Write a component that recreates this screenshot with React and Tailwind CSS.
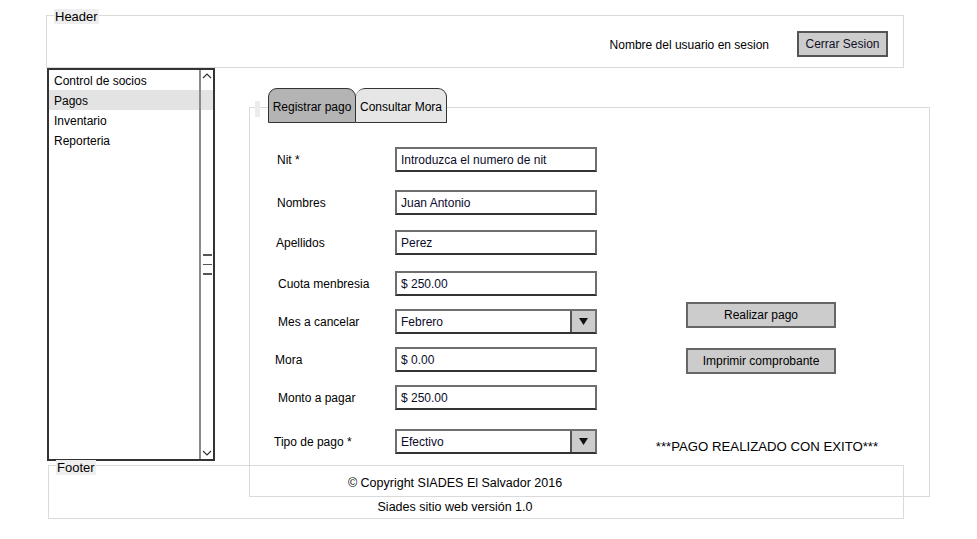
import React from 'react';

const sketch = { fontFamily: '"Liberation Sans", Arial, sans-serif' };

const rows = [
    { label: 'Nit *', value: 'Introduzca el numero de nit', mt: 'mt-[39px]', pl: 'pl-[27px]' },
    { label: 'Nombres', value: 'Juan Antonio', mt: 'mt-[18px]', pl: 'pl-[27px]' },
    { label: 'Apellidos', value: 'Perez', mt: 'mt-[15px]', pl: 'pl-[26px]' },
    { label: 'Cuota menbresia', value: '$ 250.00', mt: 'mt-[16px]', pl: 'pl-[28px]' },
    { label: 'Mes a cancelar', value: 'Febrero', mt: 'mt-[13px]', pl: 'pl-[28px]', select: true },
    { label: 'Mora', value: '$ 0.00', mt: 'mt-[13px]', pl: 'pl-[25px]' },
    { label: 'Monto a pagar', value: '$ 250.00', mt: 'mt-[13px]', pl: 'pl-[28px]' },
    { label: 'Tipo de pago *', value: 'Efectivo', mt: 'mt-[19px]', pl: 'pl-[24px]', select: true },
];

function Field({ row }) {
    return (
        <div className={`flex items-center ${row.mt}`}>
            <div className={`w-[145px] ${row.pl} text-[12px] text-black`}>{row.label}</div>
            <div className="flex h-[25px] w-[202px] items-stretch border-2 border-[#6e6e6e] border-b-[#333] bg-white">
                <div className="flex flex-1 items-center pl-[4px] text-[12px] text-[#0b0b2b]">{row.value}</div>
                {row.select && (
                    <div className="flex w-[25px] items-center justify-center border-l-2 border-[#555] bg-[#cccccc]">
                        <svg width="9" height="7" viewBox="0 0 9 7"><path d="M0 0h9L4.5 7z" fill="#111" /></svg>
                    </div>
                )}
            </div>
        </div>
    );
}

function SideList() {
    const items = ['Control de socios', 'Pagos', 'Inventario', 'Reporteria'];
    return (
        <aside className="relative ml-[47px] h-[393px] w-[168px] border-2 border-[#333] bg-white">
            <ul>
                {items.map((it) => (
                    <li key={it} className={`flex h-[20px] items-center pl-[5px] pt-[1px] text-[12px] text-black ${it === 'Pagos' ? 'bg-[#e3e3e3]' : ''}`}>
                        {it}
                    </li>
                ))}
            </ul>
            <div className="absolute right-0 top-0 flex h-full w-[14px] flex-col items-center justify-between border-l-2 border-[#8a8a8a] bg-transparent">
                <svg width="10" height="8" viewBox="0 0 10 8" className="mt-[2px]"><path d="M1 6l4-4 4 4" stroke="#333" strokeWidth="1.2" fill="none" /></svg>
                <div className="flex flex-col gap-[8px]">
                    <div className="h-[1.5px] w-[9px] bg-[#555]" />
                    <div className="h-[1.5px] w-[9px] bg-[#555]" />
                    <div className="h-[1.5px] w-[9px] bg-[#555]" />
                </div>
                <svg width="10" height="8" viewBox="0 0 10 8" className="mb-[2px]"><path d="M1 2l4 4 4-4" stroke="#333" strokeWidth="1.2" fill="none" /></svg>
            </div>
        </aside>
    );
}

export default function App() {
    return (
        <div className="h-[539px] w-[977px] overflow-hidden bg-white pt-[15px]" style={sketch}>
            {/* Header */}
            <header className="relative ml-[46px] flex h-[53px] w-[858px] items-start justify-end border border-[#dadada] pr-[15px] pt-[15px]">
                <span className="absolute -top-[7px] left-[7px] bg-[#eeeeee] px-[1px] text-[13px] leading-[15px] text-black">Header</span>
                <div className="flex h-[26px] items-center">
                    <span className="mr-[28px] pt-[2px] text-[12px] text-black">Nombre del usuario en sesion</span>
                    <button className="h-[26px] w-[91px] border-2 border-[#555] bg-[#cccccc] text-[12px] text-[#10102a]">Cerrar Sesion</button>
                </div>
            </header>

            <div className="flex h-[393px] items-start">
                <SideList />

                <main className="ml-[34px] flex flex-col">
                    <div className="relative z-10 mb-[-16px] ml-[19px] mt-[20px] flex">
                        <div className="flex h-[35px] w-[88px] items-center justify-center rounded-t-[9px] border border-[#333] bg-[#b4b4b4] pt-[2px] text-[12px] text-black">Registrar pago</div>
                        <div className="flex h-[35px] w-[91px] items-center justify-center rounded-t-[9px] border border-l-0 border-[#333] bg-[#e6e6e6] pt-[2px] text-[12px] text-black">Consultar Mora</div>
                    </div>
                    <div className="relative h-[390px] w-[681px] border border-[#dadada]">
                        <div className="absolute -top-[7px] left-[5px] h-[16px] w-[5px] bg-[#ececec]" />
                        <div className="flex">
                            <div className="flex flex-col">
                                {rows.map((r) => (
                                    <Field key={r.label} row={r} />
                                ))}
                            </div>
                            <div className="ml-[58px] flex w-[224px] flex-col">
                                <button className="ml-[31px] mt-[194px] h-[26px] w-[150px] border-2 border-[#666] bg-[#cccccc] text-[12px] text-black">Realizar pago</button>
                                <button className="ml-[31px] mt-[20px] h-[26px] w-[150px] border-2 border-[#666] bg-[#cccccc] text-[12px] text-black">Imprimir comprobante</button>
                                <div className="mt-[63px] whitespace-nowrap text-center text-[13.2px] text-black">***PAGO REALIZADO CON EXITO***</div>
                            </div>
                        </div>
                    </div>
                </main>
            </div>

            {/* Footer */}
            <footer className="relative ml-[48px] mt-[4px] h-[54px] w-[856px] border border-[#dadada]">
                <span className="absolute -top-[6px] left-[7px] bg-[#eeeeee] px-[1px] text-[13px] leading-[15px] text-black">Footer</span>
                <div className="ml-[298px] flex w-[216px] flex-col items-center pt-[9px]">
                    <span className="whitespace-nowrap text-[12.5px] leading-[16px] text-black">© Copyright SIADES El Salvador 2016</span>
                    <span className="mt-[8px] whitespace-nowrap text-[12.5px] leading-[16px] text-black">Siades sitio web versión 1.0</span>
                </div>
            </footer>
        </div>
    );
}
